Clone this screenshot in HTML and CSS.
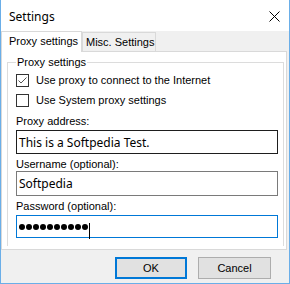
FILE: index.html
```html
<!DOCTYPE html>
<html lang="en">
<head>
  <meta charset="UTF-8" />
  <title>Settings</title>
  <link rel="stylesheet" href="styles.css">
</head>
<body>
  <div class="window">
    <div class="titlebar">
      <span class="title">Settings</span>
      <svg class="close" width="11" height="11" viewBox="0 0 11 11">
        <path d="M0.5 0.5 L10.5 10.5 M10.5 0.5 L0.5 10.5" stroke="#000" stroke-width="1" fill="none"/>
      </svg>
    </div>

    <div class="client">
      <div class="tabs">
        <div class="tab active">Proxy settings</div>
        <div class="tab">Misc. Settings</div>
      </div>

      <div class="panel">
        <div class="group">
          <span class="group-title">Proxy settings</span>

          <div class="check-row">
            <span class="box">
              <svg width="11" height="11" viewBox="0 0 11 11">
                <path d="M1.5 5.5 L4 8 L9.5 2.5" stroke="#555" stroke-width="1" fill="none"/>
              </svg>
            </span>
            <span>Use proxy to connect to the Internet</span>
          </div>
          <div class="check-row">
            <span class="box"></span>
            <span>Use System proxy settings</span>
          </div>

          <div class="label first">Proxy address:</div>
          <div class="field dark">This is a Softpedia Test.</div>

          <div class="label">Username (optional):</div>
          <div class="field tall">Softpedia</div>

          <div class="label">Password (optional):</div>
          <div class="field focus">
            <span class="dots">
              <i></i><i></i><i></i><i></i><i></i><i></i><i></i><i></i><i></i><i></i>
            </span>
            <span class="caret"></span>
          </div>
        </div>
      </div>

      <div class="buttons">
        <div class="btn default">OK</div>
        <div class="btn">Cancel</div>
      </div>
    </div>
  </div>
</body>
</html>
```

FILE: styles.css
```css
/* Global */
body {
  margin: 0;
  font-family: "Liberation Sans", Arial, sans-serif;
  font-size: 11px;
  line-height: 13px;
  color: #000;
  background: #f0f0f0;
}

/* Window frame */
.window {
  width: 290px;
  height: 284px;
  box-sizing: border-box;
  border-left: 1px solid #6aaee8;
  border-right: 1px solid #6aaee8;
  border-bottom: 1px solid #6aaee8;
  display: flex;
  flex-direction: column;
}

.titlebar {
  height: 31px;
  background: #fff;
  display: flex;
  align-items: center;
  justify-content: space-between;
  padding-left: 8px;
}

.title {
  font-family: "Noto Sans", sans-serif;
  font-size: 12px;
  margin-top: 1px;
}

.close {
  margin-right: 9px;
  margin-top: 1px;
}

.client {
  flex: 1;
  background: #f0f0f0;
  display: flex;
  flex-direction: column;
}

/* Tabs */
.tabs {
  display: flex;
  align-items: flex-end;
  height: 20px;
}

.tab {
  box-sizing: border-box;
  width: 74px;
  height: 19px;
  padding: 3px 0 0 3px;
  border: 1px solid #d9d9d9;
  border-bottom: none;
  background: #f0f0f0;
}

.tab.active {
  width: 81px;
  height: 21px;
  margin-bottom: -1px;
  padding: 3px 0 0 7px;
  background: #fff;
  position: relative;
  z-index: 1;
}

/* Tab page */
.panel {
  box-sizing: border-box;
  height: 199px;
  margin-right: 2px;
  border: 1px solid #d9d9d9;
  background: #fff;
  padding: 10px 2px 0 5px;
}

.group {
  height: 184px;
  box-sizing: border-box;
  border: 1px solid #dcdcdc;
  border-bottom: none;
  padding: 0 4px 0 8px;
  display: flex;
  flex-direction: column;
}

.group-title {
  align-self: flex-start;
  margin: -7px 0 0 0;
  padding: 0 1px;
  background: #fff;
}

.check-row {
  display: flex;
  align-items: center;
  gap: 7px;
  height: 20px;
}

.check-row:first-of-type {
  margin-top: 1px;
}

.box {
  box-sizing: border-box;
  width: 13px;
  height: 13px;
  border: 1px solid #333;
  background: #fff;
  display: flex;
}

.label {
  margin-top: 4px;
}

.label.first {
  margin-top: 5px;
}

.field {
  box-sizing: border-box;
  height: 24px;
  margin-top: 2px;
  margin-right: 1px;
  border: 1px solid #7a7a7a;
  padding: 0 2px;
  display: flex;
  align-items: center;
  font-family: "Noto Sans", sans-serif;
  font-size: 12px;
}

.label + .field.tall {
  height: 25px;
  margin-top: 0;
}

.field.dark {
  border-color: #1e1e1e;
}

.field.focus {
  height: 23px;
  border-color: #0078d7;
}

.dots {
  display: flex;
  gap: 1px;
}

.dots i {
  width: 6px;
  height: 6px;
  border-radius: 50%;
  background: #000;
}

.caret {
  width: 1px;
  height: 16px;
  margin: 9px 0 0 1px;
  background: #000;
}

/* Buttons */
.buttons {
  display: flex;
  justify-content: flex-end;
  gap: 11px;
  margin-top: 7px;
  padding-right: 18px;
}

.btn {
  box-sizing: border-box;
  width: 73px;
  height: 22px;
  border: 1px solid #adadad;
  background: #e1e1e1;
  display: flex;
  align-items: center;
  justify-content: center;
}

.btn.default {
  width: 72px;
  border: 2px solid #0078d7;
}
```
